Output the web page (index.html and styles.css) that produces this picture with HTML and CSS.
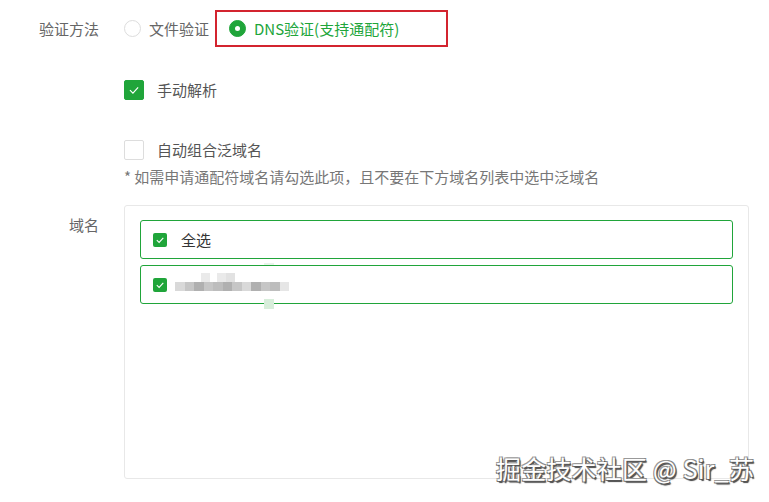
FILE: index.html
```html
<!DOCTYPE html>
<html lang="zh-CN">
<head>
<meta charset="utf-8">
<title>验证方法</title>
<link rel="stylesheet" href="styles.css">
</head>
<body>
<div class="form">
  <div class="row row-method">
    <div class="lbl">验证方法</div>
    <div class="ctl radios">
      <label class="radio"><span class="radio-dot"></span><span>文件验证</span></label>
      <label class="radio radio-on highlight"><span class="radio-dot"></span><span>DNS验证(支持通配符)</span></label>
    </div>
  </div>

  <div class="row row-manual">
    <div class="lbl"></div>
    <div class="ctl">
      <label class="check"><span class="box box-on"><svg viewBox="0 0 20 20"><path d="M5.5 10.2 L8.8 13.4 L14.6 7" fill="none" stroke="#fff" stroke-width="1.3"/></svg></span><span>手动解析</span></label>
    </div>
  </div>

  <div class="row row-auto">
    <div class="lbl"></div>
    <div class="ctl">
      <label class="check"><span class="box"></span><span>自动组合泛域名</span></label>
      <div class="note">* 如需申请通配符域名请勾选此项，且不要在下方域名列表中选中泛域名</div>
    </div>
  </div>

  <div class="row row-domain">
    <div class="lbl lbl-domain">域名</div>
    <div class="ctl">
      <div class="domain-box">
        <div class="item">
          <span class="sbox"><svg viewBox="0 0 14 14"><path d="M3.8 7.2 L6.1 9.4 L10.3 4.9" fill="none" stroke="#fff" stroke-width="1.1"/></svg></span>
          <span class="item-text">全选</span>
        </div>
        <div class="item item-masked">
          <span class="sbox"><svg viewBox="0 0 14 14"><path d="M3.8 7.2 L6.1 9.4 L10.3 4.9" fill="none" stroke="#fff" stroke-width="1.1"/></svg></span>
          <span class="mosaic">
            <span class="m m1"></span><span class="m m2"></span><span class="m m3"></span><span class="m m2"></span><span class="m m4"></span><span class="m m3"></span><span class="m m2"></span><span class="m m1"></span><span class="m m3"></span><span class="m m2"></span><span class="m m4"></span><span class="m m5"></span>
            <span class="mu mu1"></span><span class="mu mu2"></span><span class="mu mu3"></span><span class="mg mg1"></span><span class="mg mg2"></span>
          </span>
        </div>
      </div>
    </div>
  </div>
</div>
<div class="watermark">掘金技术社区 @ Sir_苏</div>
</body>
</html>
```
FILE: styles.css
```css
html, body {
  margin: 0;
  padding: 0;
  background: #fff;
}
body {
  width: 769px;
  height: 502px;
  position: relative;
  overflow: hidden;
  font-family: "Noto Sans CJK SC", "Noto Sans", sans-serif;
  font-size: 15px;
  color: #555;
}
.form {
  padding-top: 10px;
}
.row {
  display: flex;
  align-items: flex-start;
}
.lbl {
  width: 99px;
  flex: 0 0 99px;
  margin-right: 25px;
  text-align: right;
  color: #666;
  line-height: 37px;
}
.ctl {
  flex: 1;
}
.radios {
  display: flex;
  align-items: center;
  height: 37px;
}
.radio {
  display: inline-flex;
  align-items: center;
  gap: 8px;
  color: #666;
}
.radio-dot {
  width: 17px;
  height: 17px;
  border: 1px solid #ddd;
  border-radius: 50%;
  box-sizing: border-box;
  background: #fff;
  position: relative;
}
.radio-on {
  color: #20a53a;
}
.radio-on .radio-dot {
  border-color: #20a53a;
  background: #20a53a;
}
.radio-on .radio-dot::after {
  content: "";
  position: absolute;
  left: 5px;
  top: 5px;
  width: 5px;
  height: 5px;
  border-radius: 50%;
  background: #fff;
}
.highlight {
  margin-left: 6px;
  width: 233px;
  height: 37px;
  box-sizing: border-box;
  border: 2px solid #d3242f;
  padding-left: 12px;
}
.row-manual {
  margin-top: 33px;
}
.row-auto {
  margin-top: 37px;
}
.check {
  display: inline-flex;
  align-items: center;
  gap: 13px;
  color: #555;
  line-height: 20px;
}
.box {
  width: 20px;
  height: 20px;
  box-sizing: border-box;
  border: 1px solid #ddd;
  border-radius: 2px;
  background: #fff;
  display: inline-flex;
}
.box-on {
  background: #20a53a;
  border-color: #20a53a;
}
.box svg, .sbox svg {
  width: 100%;
  height: 100%;
}
.note {
  margin-top: 2px;
  font-size: 15px;
  color: #777;
  line-height: 22px;
}
.row-domain {
  margin-top: 17px;
}
.lbl-domain {
  line-height: 28px;
  padding-top: 6px;
}
.domain-box {
  width: 625px;
  height: 274px;
  box-sizing: border-box;
  border: 1px solid #e8e8e8;
  border-radius: 3px;
  padding: 14px 15px;
  display: flex;
  flex-direction: column;
  gap: 6px;
}
.item {
  height: 39px;
  flex: 0 0 39px;
  box-sizing: border-box;
  border: 1px solid #20a53a;
  border-radius: 3px;
  padding-left: 12px;
  display: flex;
  align-items: center;
  gap: 14px;
  position: relative;
}
.sbox {
  width: 14px;
  height: 14px;
  border-radius: 2px;
  background: #20a53a;
  display: inline-flex;
}
.item-text {
  color: #333;
}
.item-masked {
  gap: 8px;
}
.mosaic {
  display: flex;
  align-items: center;
  position: relative;
  height: 9px;
  margin-top: 3px;
}
.m {
  width: 9.5px;
  height: 9px;
}
.m1 { background: #d9d9d9; }
.m2 { background: #c6c6c6; }
.m3 { background: #b0b0b0; }
.m4 { background: #bdbdbd; }
.m5 { background: #e6e6e6; }
.mu {
  position: absolute;
  width: 9px;
  height: 9px;
  top: -9px;
  background: #eaeaea;
}
.mu1 { left: 26px; }
.mu2 { left: 42px; }
.mu3 { left: 51px; background: #e2e2e2; }
.mg {
  position: absolute;
  width: 10px;
  height: 10px;
  background: #d8eedb;
}
.mg1 { left: 89px; top: 17px; }
.mg2 { left: 89px; top: -19px; height: 2px; background: #e8f4ea; }
.watermark {
  position: absolute;
  left: 496px;
  top: 452px;
  font-size: 25px;
  line-height: 32px;
  color: #fff;
  letter-spacing: 0.2px;
  text-shadow: 1px 1px 0 #555, -1px -1px 0 #999, 1px -1px 0 #888, -1px 1px 0 #777, 1.5px 1.5px 1px #444;
  white-space: nowrap;
}
```
